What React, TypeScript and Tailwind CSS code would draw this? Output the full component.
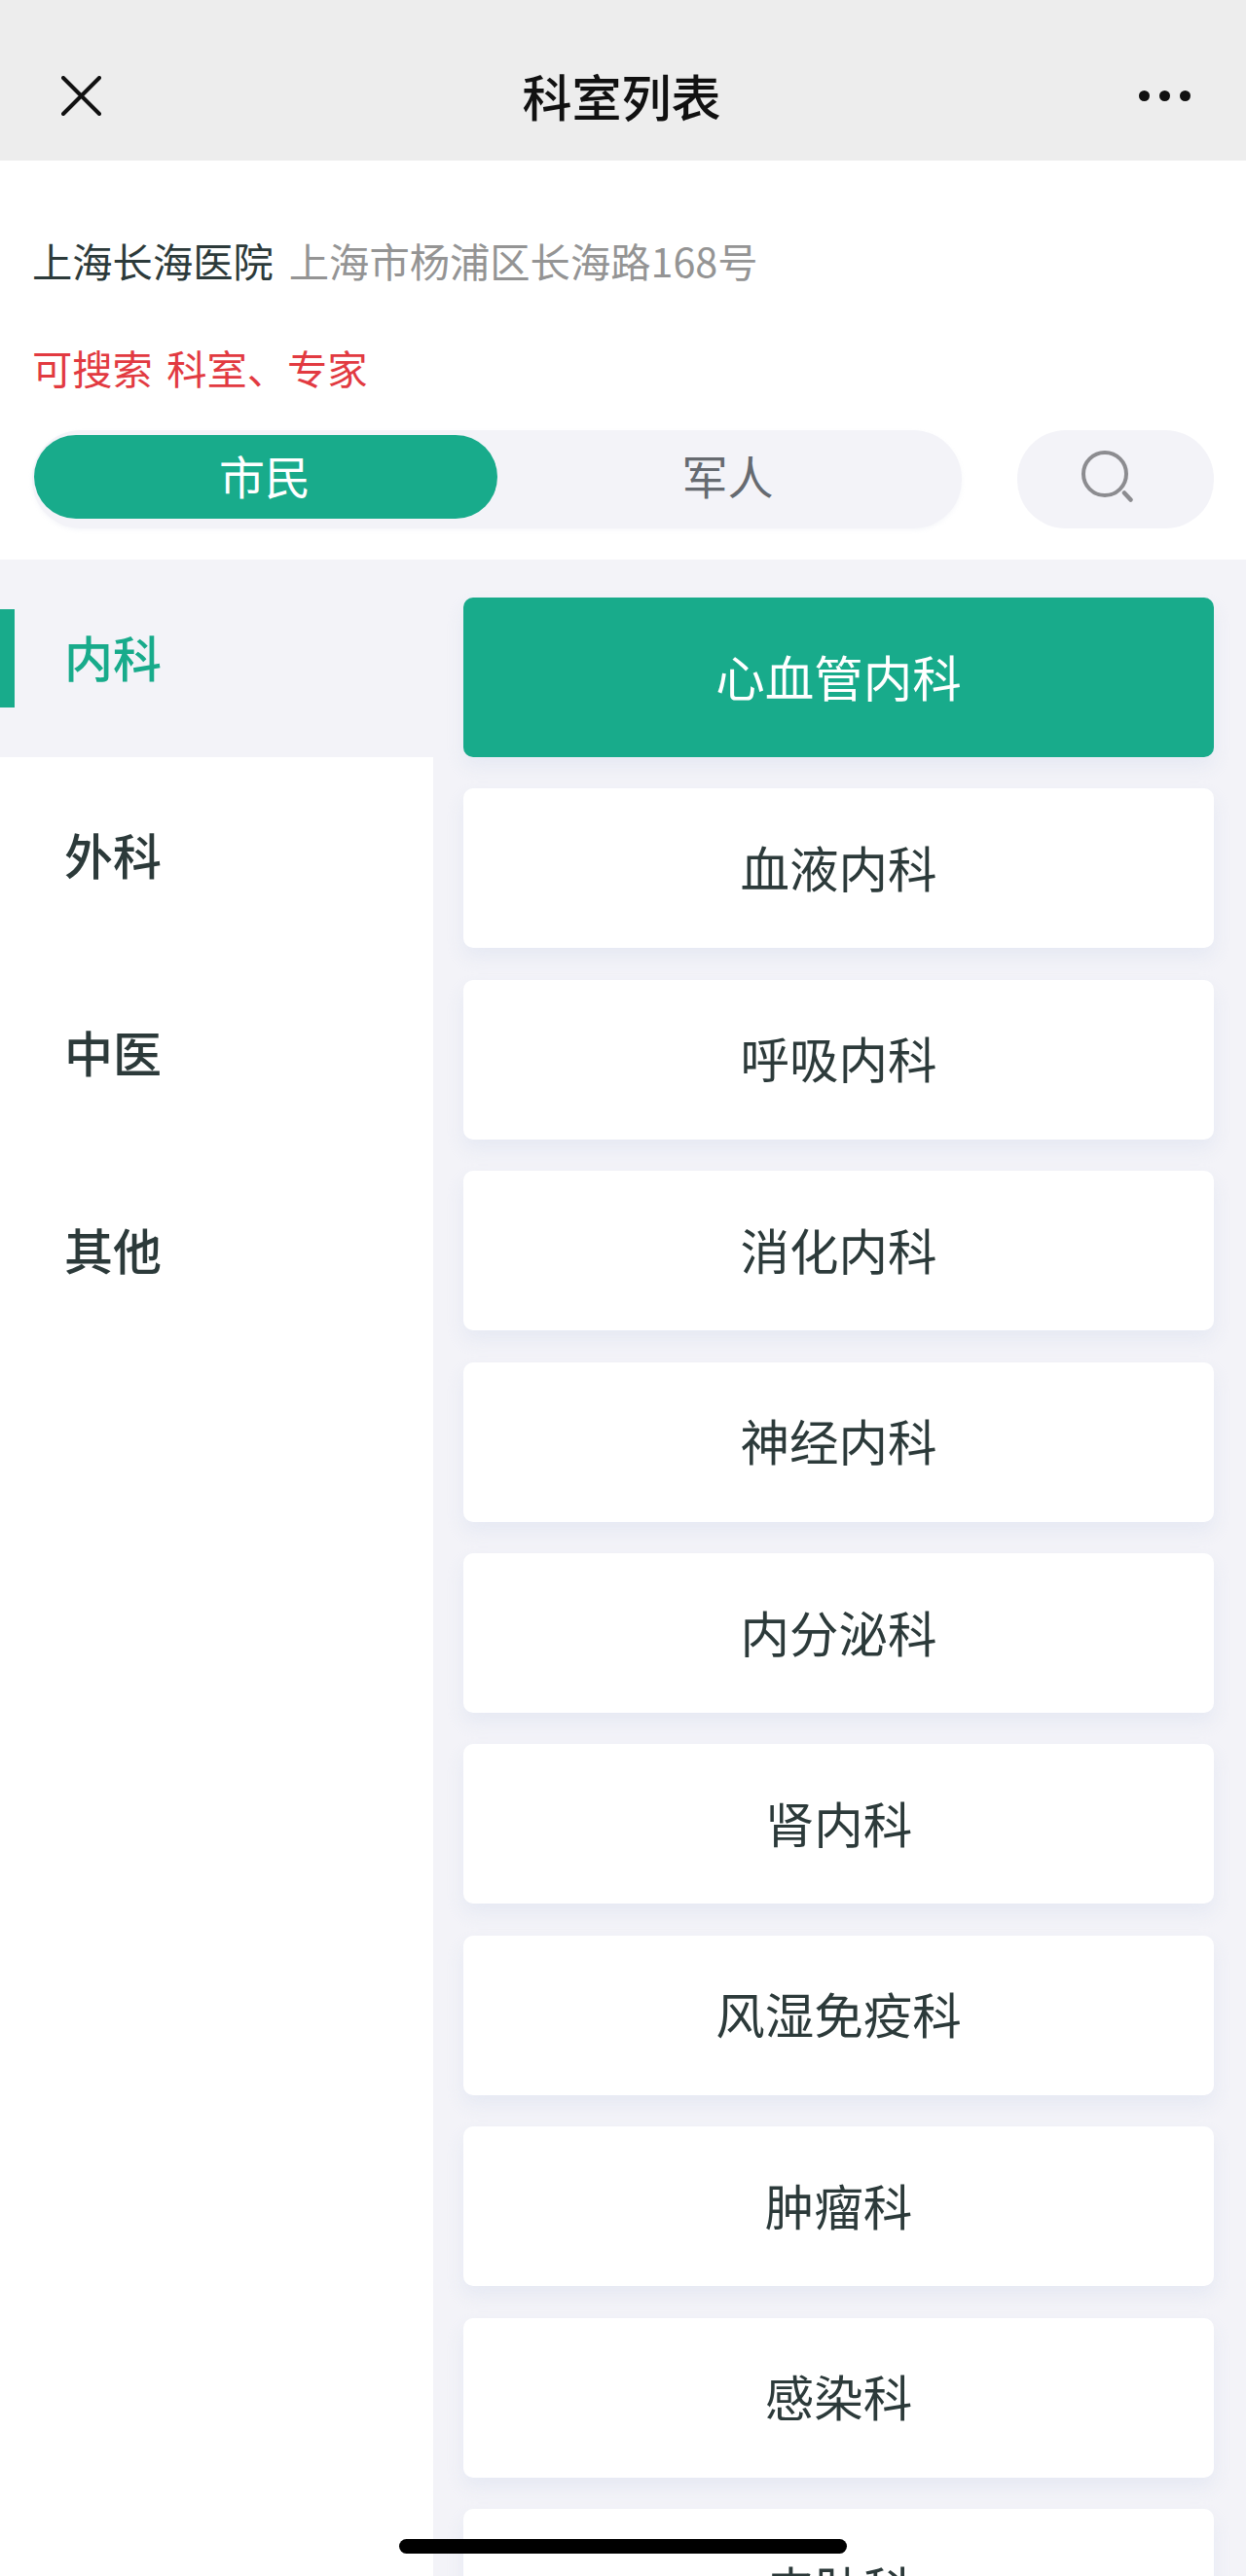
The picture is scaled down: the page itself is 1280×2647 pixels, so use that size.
const font = { fontFamily: '"Noto Sans CJK SC", "Liberation Sans", sans-serif' };

const departments = ['心血管内科', '血液内科', '呼吸内科', '消化内科', '神经内科', '内分泌科', '肾内科', '风湿免疫科', '肿瘤科', '感染科', '皮肤科'];
const categories = ['内科', '外科', '中医', '其他'];

export default function App() {
  return (
    <div className="relative h-[2647px] w-[1280px] overflow-hidden bg-white" style={font}>
      <header className="grid h-[165px] grid-cols-[1fr_auto_1fr] items-center bg-[#ededed] pl-[63px] pr-[57px] pt-[32px]">
        <svg width="41" height="41" viewBox="0 0 41 41" fill="none" stroke="#111" strokeWidth="4" strokeLinecap="round">
          <path d="M2 2 L39 39 M39 2 L2 39" />
        </svg>
        <h1 className="mr-[9px] text-[51px] font-medium leading-none text-[#111]">科室列表</h1>
        <div className="flex justify-end gap-[10px]">
          <span className="h-[11px] w-[11px] rounded-full bg-[#111]" />
          <span className="h-[11px] w-[11px] rounded-full bg-[#111]" />
          <span className="h-[11px] w-[11px] rounded-full bg-[#111]" />
        </div>
      </header>

      <section className="h-[410px] px-[33px] pt-[78px]">
        <p className="flex h-[50px] items-center whitespace-nowrap text-[41.3px] leading-none">
          <span className="text-[#2c3a3a]">上海长海医院</span>
          <span className="ml-[16px] text-[#949494]">上海市杨浦区长海路168号</span>
        </p>
        <p className="mt-[60px] flex h-[50px] items-center whitespace-pre text-[41.3px] leading-none text-[#e23a41] [word-spacing:5px]">可搜索 科室、专家</p>
        <div className="mt-[39px] flex items-center justify-between">
          <div className="flex h-[101px] w-[955px] items-start rounded-[50px] bg-[#f3f3f8] pl-[2px] pt-[5px] shadow-[0_2px_4px_rgba(225,228,240,0.3)]">
            <div className="flex h-[86px] w-[476px] items-center justify-center rounded-[43px] bg-[#18ab8b] pb-[4px] pr-[2px] text-[47px] text-white">市民</div>
            <div className="flex h-[86px] w-[476px] items-center justify-center pb-[4px] pr-[3px] text-[47px] text-[#666a70]">军人</div>
          </div>
          <div className="flex h-[101px] w-[202px] items-center justify-center rounded-[50px] bg-[#f3f3f8] pb-[5px] pr-[16px]">
            <svg width="56" height="56" viewBox="0 0 56 56" fill="none" stroke="#8c8c90" strokeWidth="4" strokeLinecap="round">
              <circle cx="25" cy="25" r="22" />
              <path d="M45 44.5 L51.5 51.5" strokeWidth="4.5" />
            </svg>
          </div>
        </div>
      </section>

      <main className="flex">
        <nav className="w-[445px] shrink-0 bg-white">
          {categories.map((c, i) => (
            <div key={c} className={`relative flex h-[203px] items-center pb-[5px] pl-[66px] text-[50px] font-medium ${i === 0 ? 'bg-[#f3f3f8] text-[#18ab8b]' : 'text-[#2c3a3a]'}`}>
              {i === 0 && <span className="absolute left-0 top-[51px] h-[101px] w-[15px] bg-[#18ab8b]" />}
              {c}
            </div>
          ))}
        </nav>
        <div className="flex flex-1 flex-col gap-[32.4px] bg-[#f3f3f8] pb-[100px] pl-[31px] pr-[33px] pt-[39px]">
          {departments.map((d, i) => (
            <div key={d} className={`flex h-[164px] shrink-0 items-center justify-center rounded-[10px] pb-[3px] text-[50.5px] shadow-[0_10px_18px_rgba(222,226,240,0.6)] ${i === 0 ? 'bg-[#18ab8b] text-white' : 'bg-white text-[#2c3a3a]'}`}>
              {d}
            </div>
          ))}
        </div>
      </main>

      <div className="absolute left-[410px] top-[2609px] h-[15px] w-[460px] rounded-full bg-black" />
    </div>
  );
}
